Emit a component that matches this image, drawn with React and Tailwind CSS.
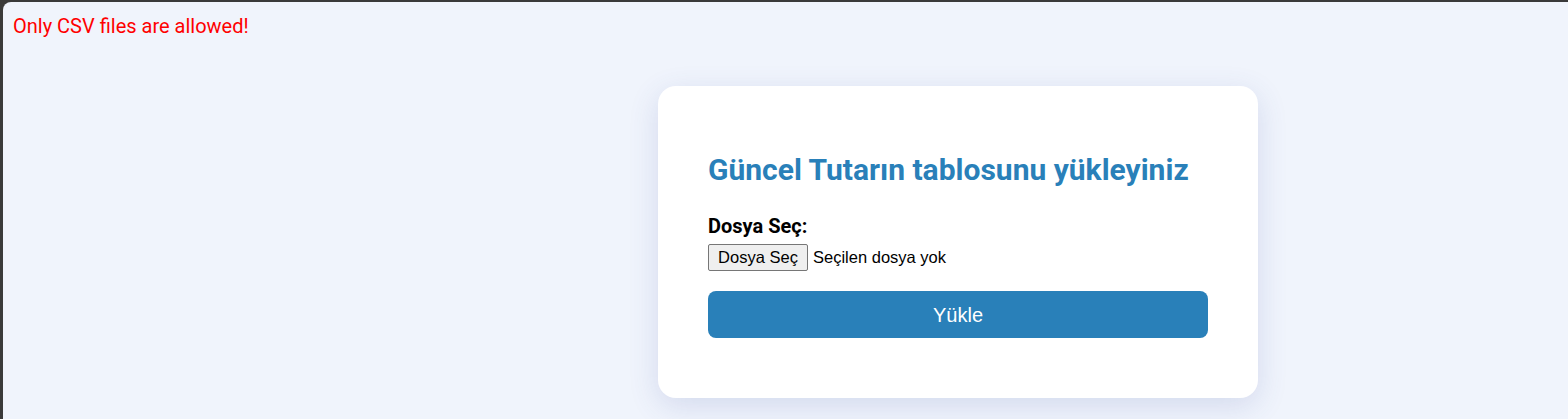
export default function App() {
  return (
    <div className="w-[1568px] h-[419px] bg-[#3a3a3a] pt-[2px] pl-[3px]">
      <div className="h-full bg-[#f0f4fc] rounded-tl-[8px] overflow-hidden">
        <p className="pl-[10px] pt-[12px] text-[20px] leading-[24px] text-[#ff0000]" style={{ fontFamily: "Roboto, sans-serif" }}>
          Only CSV files are allowed!
        </p>
        <div className="ml-[655px] mt-[48px] w-[600px] h-[312px] bg-white rounded-[18px] shadow-[0_8px_30px_rgba(60,80,160,0.16)] px-[50px] pt-[66px]">
          <h2 className="text-[30px] leading-[36px] font-bold text-[#2980b9]" style={{ fontFamily: "Roboto, sans-serif" }}>
            Güncel Tutarın tablosunu yükleyiniz
          </h2>
          <div className="mt-[26px] text-[20px] leading-[24px] font-bold text-black" style={{ fontFamily: "Roboto, sans-serif" }}>
            Dosya Seç:
          </div>
          <div className="mt-[6px] flex items-center gap-[5px]" style={{ fontFamily: "'Liberation Sans', Arial, sans-serif" }}>
            <button className="h-[27px] w-[100px] border border-[#767676] rounded-[2px] bg-[#efefef] text-[16.5px] text-black">
              Dosya Seç
            </button>
            <span className="text-[16.5px] text-black">Seçilen dosya yok</span>
          </div>
          <button className="mt-[20px] w-[500px] h-[47px] rounded-[8px] bg-[#2980b9] text-white text-[20px]" style={{ fontFamily: "'Liberation Sans', Arial, sans-serif" }}>
            Yükle
          </button>
        </div>
      </div>
    </div>
  );
}
